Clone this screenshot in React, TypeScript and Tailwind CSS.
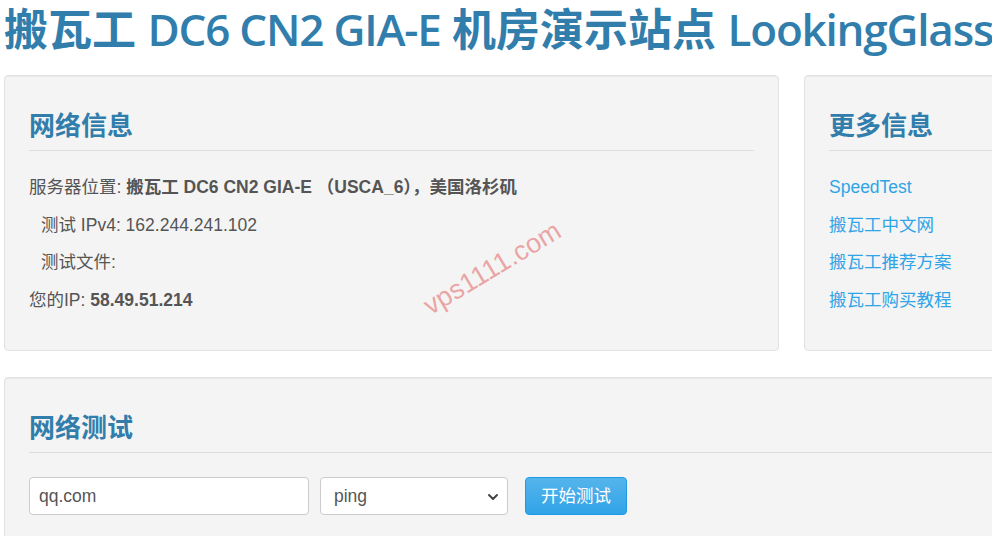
import { ChevronDown } from 'lucide-react';

const sans = "font-['Liberation_Sans','Noto_Sans_CJK_SC',sans-serif]";
const head = "font-['Open_Sans','Noto_Sans_CJK_SC',sans-serif]";

const links = ['SpeedTest', '搬瓦工中文网', '搬瓦工推荐方案', '搬瓦工购买教程'];

const Well = ({ title, className, children }: { title: string; className: string; children: React.ReactNode }) => (
  <div className={`shrink-0 rounded-[4px] border border-[#e3e3e3] bg-[#f4f4f4] px-6 pt-[34px] shadow-[inset_0_1px_1px_rgba(0,0,0,0.05)] ${className}`}>
    <div className="border-b border-[#dddddd] pb-[10px]">
      <h3 className={`${head} text-[26px] leading-[30px] font-bold text-[#317eac]`}>{title}</h3>
    </div>
    {children}
  </div>
);

export default function App() {
  return (
    <div className={`${sans} min-h-screen w-full overflow-hidden bg-white text-[17.5px] text-[#555555]`}>
      <h1 className={`${head} whitespace-nowrap pl-[4px] pt-[1px] text-[44px] leading-[56px] font-semibold text-[#317eac]`}>
        搬瓦工 <span className="tracking-[-1.2px]">DC6 CN2 GIA-E</span> 机房演示站点{' '}
        <span className="tracking-[-1.2px]">LookingGlass</span>
      </h1>

      <div className="mt-[18px] flex gap-[25px] pl-[4px]">
        <Well title="网络信息" className="relative w-[775px] pb-[31px]">
          <div className="mt-[18px]">
            <p className="leading-[37.5px]">
              服务器位置: <b>搬瓦工 DC6 CN2 GIA-E （USCA_6），美国洛杉矶</b>
            </p>
            <p className="pl-3 leading-[37.5px]">测试 IPv4: 162.244.241.102</p>
            <p className="pl-3 leading-[37.5px]">测试文件:</p>
            <p className="leading-[37.5px]">
              您的IP: <b>58.49.51.214</b>
            </p>
          </div>
          {/* watermark */}
          <span className="pointer-events-none absolute left-[410px] top-[172px] -rotate-[31deg] text-[27px] text-[#e05555]/50">
            vps1111.com
          </span>
        </Well>

        <Well title="更多信息" className="w-[300px] pb-[31px]">
          <ul className="mt-[18px]">
            {links.map((l) => (
              <li key={l} className="leading-[37.5px] text-[#2fa4e7]">
                {l}
              </li>
            ))}
          </ul>
        </Well>
      </div>

      <div className="mt-[26px] pl-[4px]">
        <Well title="网络测试" className="w-[1100px] pb-6">
          <div className="mt-[24px] flex items-center">
            <input
              defaultValue="qq.com"
              className="h-[38px] w-[280px] rounded-[4px] border border-[#cccccc] bg-white px-[9px] text-[17.5px] text-[#555555] outline-none"
            />
            <div className="relative ml-[11px] h-[38px] w-[188px] rounded-[4px] border border-[#cccccc] bg-white">
              <span className="absolute left-[13px] top-[7px] leading-[22px]">ping</span>
              <ChevronDown className="absolute right-[6px] top-[11px] h-4 w-4 text-[#444]" strokeWidth={3} />
            </div>
            <button className="ml-[17px] h-[38px] w-[102px] rounded-[4px] border border-[#1d9ce5] bg-gradient-to-b from-[#54b4eb] to-[#2fa4e7] text-[17.5px] text-white">
              开始测试
            </button>
          </div>
        </Well>
      </div>
    </div>
  );
}
